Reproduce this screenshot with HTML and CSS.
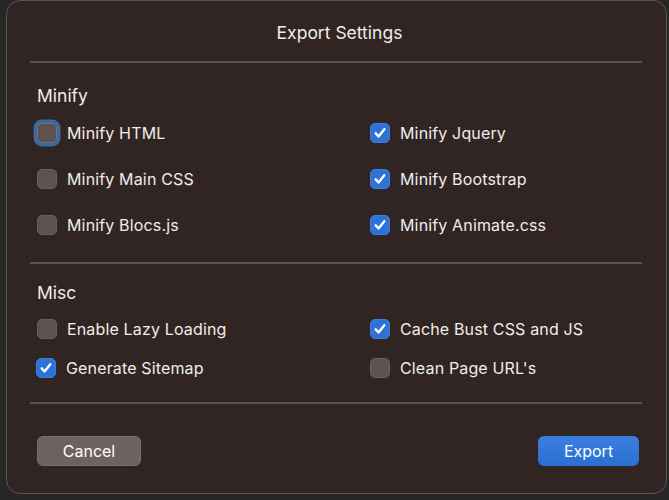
FILE: index.html
```html
<!DOCTYPE html>
<html lang="en">
<head>
<meta charset="utf-8">
<title>Export Settings</title>
<link rel="stylesheet" href="styles.css">
</head>
<body>
<div class="dialog">
  <div class="title">Export Settings</div>
  <div class="rule rule-top"></div>

  <div class="section-title first">Minify</div>
  <div class="grid minify">
    <label class="opt"><span class="box focus"></span>Minify HTML</label>
    <label class="opt"><span class="box on"><svg viewBox="0 0 20 20"><path d="M5.2 10.4l3.2 3.4 6.4-8"/></svg></span>Minify Jquery</label>
    <label class="opt"><span class="box"></span>Minify Main CSS</label>
    <label class="opt"><span class="box on"><svg viewBox="0 0 20 20"><path d="M5.2 10.4l3.2 3.4 6.4-8"/></svg></span>Minify Bootstrap</label>
    <label class="opt"><span class="box"></span>Minify Blocs.js</label>
    <label class="opt"><span class="box on"><svg viewBox="0 0 20 20"><path d="M5.2 10.4l3.2 3.4 6.4-8"/></svg></span>Minify Animate.css</label>
  </div>

  <div class="rule rule-mid"></div>

  <div class="section-title">Misc</div>
  <div class="grid misc">
    <label class="opt"><span class="box"></span>Enable Lazy Loading</label>
    <label class="opt"><span class="box on"><svg viewBox="0 0 20 20"><path d="M5.2 10.4l3.2 3.4 6.4-8"/></svg></span>Cache Bust CSS and JS</label>
    <label class="opt shift"><span class="box on"><svg viewBox="0 0 20 20"><path d="M5.2 10.4l3.2 3.4 6.4-8"/></svg></span>Generate Sitemap</label>
    <label class="opt"><span class="box"></span>Clean Page URL's</label>
  </div>

  <div class="rule rule-bottom"></div>

  <div class="actions">
    <button class="btn cancel">Cancel</button>
    <button class="btn primary">Export</button>
  </div>
</div>
</body>
</html>
```

FILE: styles.css
```css
html, body {
  margin: 0;
  padding: 0;
  height: 100%;
  overflow: hidden;
}

body {
  background: #272626;
  padding-left: 6px;
  font-family: Inter, "Noto Sans", "Liberation Sans", sans-serif;
  color: #f0ecea;
}

.dialog {
  box-sizing: border-box;
  width: 661px;
  height: 494px;
  background: #312524;
  border: 1px solid #5c5553;
  border-radius: 14px;
  padding: 0 27px 0 30px;
  display: flex;
  flex-direction: column;
}

.title {
  padding-top: 21px;
  font-size: 17.5px;
  line-height: 22px;
  text-align: center;
  margin-left: 3px;
}

.rule {
  height: 2px;
  background: #5a5250;
  margin-left: -7px;
  margin-right: -3px;
}

.rule-top { margin-top: 17px; }
.rule-mid { margin-top: 14px; }
.rule-bottom { margin-top: 15px; }

.section-title {
  font-size: 17.5px;
  line-height: 22px;
  margin-top: 18px;
}

.section-title.first { margin-top: 22px; }

.grid {
  display: grid;
  grid-template-columns: 333px 1fr;
}

.minify { margin-top: 3px; grid-auto-rows: 46px; }
.misc { margin-top: 5px; grid-auto-rows: 39px; }

.opt {
  display: flex;
  align-items: center;
  gap: 10px;
  font-size: 16px;
  letter-spacing: 0.15px;
}

.opt.shift { margin-left: -1px; }

.box {
  box-sizing: border-box;
  width: 20px;
  height: 20px;
  border-radius: 5px;
  background: #5d524f;
  border: 1px solid #6a5f5c;
  display: flex;
  align-items: center;
  justify-content: center;
  flex: none;
}

.box.focus {
  box-shadow: 0 0 0 3.5px #3a6aa0;
  border-color: #7b706c;
}

.box.on {
  background: #2f72d6;
  border-color: #3b7ddc;
}

.box svg {
  width: 20px;
  height: 20px;
}

.box svg path {
  fill: none;
  stroke: #ffffff;
  stroke-width: 2.6;
  stroke-linecap: round;
  stroke-linejoin: round;
}

.actions {
  margin-top: 32px;
  display: flex;
  justify-content: space-between;
}

.btn {
  font-family: inherit;
  font-size: 16px;
  color: #ffffff;
  height: 30px;
  border: none;
  border-radius: 6px;
  padding: 0;
}

.cancel {
  width: 104px;
  background: #6d6260;
  border: 1px solid #7a6f6c;
}

.primary {
  width: 101px;
  background: linear-gradient(#3a7fe0, #2c6ed2);
}
```
